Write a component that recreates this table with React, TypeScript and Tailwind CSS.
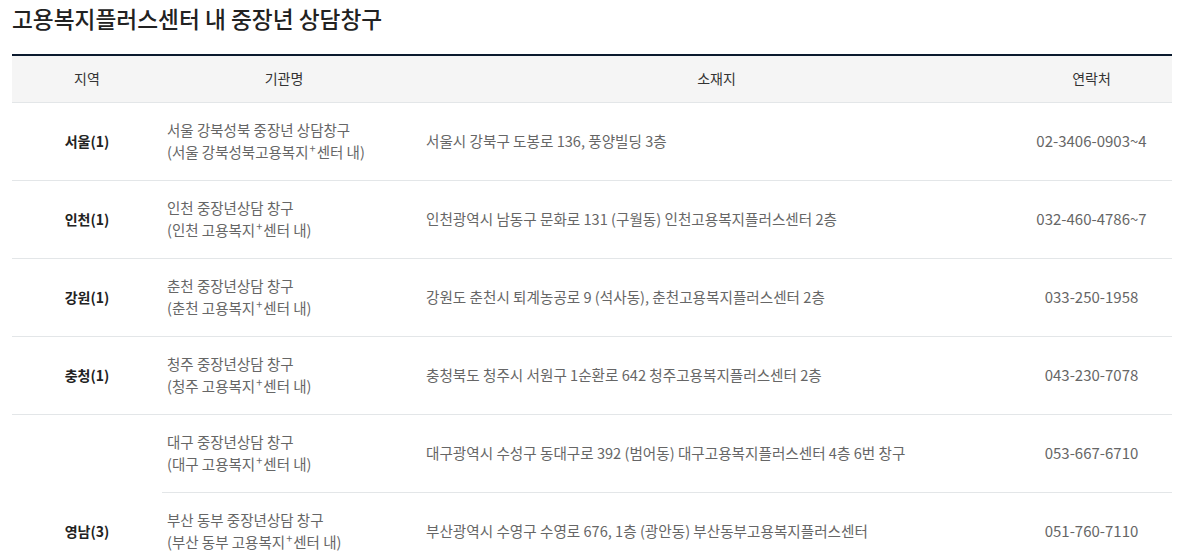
import React from "react";

type Row = { region?: string; span?: number; name1: string; name2: string; addr: string; tel: string };

const rows: Row[] = [
  { region: "서울(1)", name1: "서울 강북성북 중장년 상담창구", name2: "(서울 강북성북고용복지", addr: "서울시 강북구 도봉로 136, 풍양빌딩 3층", tel: "02-3406-0903~4" },
  { region: "인천(1)", name1: "인천 중장년상담 창구", name2: "(인천 고용복지", addr: "인천광역시 남동구 문화로 131 (구월동) 인천고용복지플러스센터 2층", tel: "032-460-4786~7" },
  { region: "강원(1)", name1: "춘천 중장년상담 창구", name2: "(춘천 고용복지", addr: "강원도 춘천시 퇴계농공로 9 (석사동), 춘천고용복지플러스센터 2층", tel: "033-250-1958" },
  { region: "충청(1)", name1: "청주 중장년상담 창구", name2: "(청주 고용복지", addr: "충청북도 청주시 서원구 1순환로 642 청주고용복지플러스센터 2층", tel: "043-230-7078" },
  { region: "영남(3)", span: 3, name1: "대구 중장년상담 창구", name2: "(대구 고용복지", addr: "대구광역시 수성구 동대구로 392 (범어동) 대구고용복지플러스센터 4층 6번 창구", tel: "053-667-6710" },
  { name1: "부산 동부 중장년상담 창구", name2: "(부산 동부 고용복지", addr: "부산광역시 수영구 수영로 676, 1층 (광안동) 부산동부고용복지플러스센터", tel: "051-760-7110" },
  { name1: "창원 중장년상담 창구", name2: "(창원 고용복지", addr: "경상남도 창원시 성산구 중앙대로 107 창원고용복지플러스센터", tel: "055-239-0900" },
];

export default function App() {
  return (
    <div
      className="w-[1186px] h-[552px] overflow-hidden bg-white"
      style={{ fontFamily: '"Noto Sans CJK KR", "Noto Sans", sans-serif' }}
    >
      <h1 className="pl-[12px] pt-[3px] h-[54px] text-[22.7px] leading-[32px] font-medium text-[#222]">
        고용복지플러스센터 내 중장년 상담창구
      </h1>
      <table className="ml-[12px] w-[1160px] table-fixed border-collapse border-t-2 border-[#0b1a2e] text-[14px]">
        <colgroup>
          <col className="w-[150px]" />
          <col className="w-[244px]" />
          <col className="w-[605px]" />
          <col className="w-[161px]" />
        </colgroup>
        <thead>
          <tr className="h-[47px] bg-[#f5f5f5] border-b border-[#e3e6e8] text-[#333]">
            <th className="font-normal text-center">지역</th>
            <th className="font-normal text-center">기관명</th>
            <th className="font-normal text-center pl-[16px]">소재지</th>
            <th className="font-normal text-center">연락처</th>
          </tr>
        </thead>
        <tbody>
          {rows.map((r, i) => (
            <tr key={i} className="h-[78px] border-b border-[#e3e6e8]">
              {r.region !== undefined && (
                <td rowSpan={r.span ?? 1} className="text-center font-bold text-[#222] align-middle border-b border-[#e3e6e8]">
                  {r.region}
                </td>
              )}
              <td className="pl-[5px] text-[14.5px] text-[#666] leading-[22px] align-middle whitespace-nowrap">
                <div>{r.name1}</div>
                <div>
                  {r.name2}
                  <span className="text-[11px] relative top-[-5px] mx-[1px]">+</span>센터 내)
                </div>
              </td>
              <td className="pl-[20px] text-[14.6px] text-[#666] align-middle whitespace-nowrap">{r.addr}</td>
              <td className="text-center text-[15px] text-[#666] align-middle">{r.tel}</td>
            </tr>
          ))}
        </tbody>
      </table>
    </div>
  );
}
